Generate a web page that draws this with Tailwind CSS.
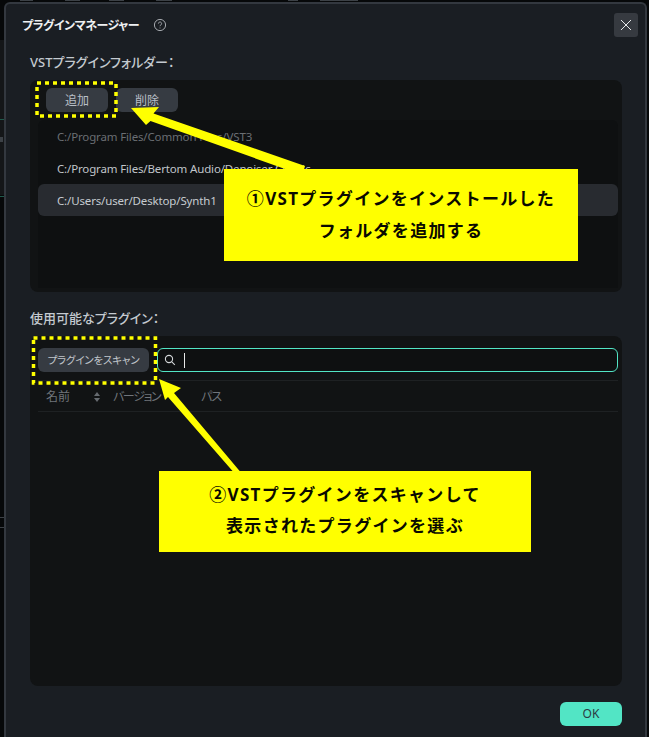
<!DOCTYPE html>
<html lang="ja"><head><meta charset="utf-8">
<script src="https://cdn.jsdelivr.net/npm/@tailwindcss/browser@4"></script>
</head>
<body class="bg-[#060809] overflow-hidden">
<div class="relative w-[649px] h-[737px] overflow-hidden pt-[2px] pl-[4px] pr-[2px] font-['Noto_Sans','Noto_Sans_CJK_JP',sans-serif] [font-feature-settings:'palt']">
  <div class="relative z-10 h-[740px] rounded-t-md border-2 border-b-0 border-[#33383f] bg-[#1a1e23] pl-[24px] pr-[23px] flex flex-col">
    <div class="h-[42px] flex items-center relative -ml-[8px]">
      <span class="text-[12px] font-bold text-[#eef0f2] mt-[1px] tracking-[-0.5px]">プラグインマネージャー</span>
      <svg class="ml-[14px]" width="14" height="14" viewBox="0 0 14 14" fill="none" stroke="#a4a8ad"><circle cx="7" cy="7" r="5.6"/><path d="M5.4 5.6a1.6 1.6 0 1 1 2.5 1.3c-.6.4-.9.7-.9 1.3"/><path d="M7 9.6v.8"/></svg>
      <div class="ml-auto -mr-[16px] w-[24px] h-[24px] rounded-[3px] bg-[#363a40] flex items-center justify-center">
        <svg width="12" height="12" viewBox="0 0 12 12" stroke="#e6e8ea" stroke-width="1"><path d="M1 1l10 10M11 1L1 11"/></svg>
      </div>
    </div>
    <div class="h-[34px] flex items-center text-[13px] font-medium text-[#c4cad0]">VSTプラグインフォルダー：</div>
    <section class="h-[212px] rounded-lg bg-[#111314] flex flex-col">
      <div class="h-[40px] shrink-0 flex items-start gap-2 pl-[16px] pt-[8px]">
        <button class="w-[62px] h-[24px] pt-[1px] rounded-md bg-[#363b42] text-[12px] text-[#b9bfc6]">追加</button>
        <button class="w-[62px] h-[24px] pt-[1px] rounded-md bg-[#363b42] text-[12px] text-[#b9bfc6]">削除</button>
      </div>
      <div class="flex-1 ml-[8px] mr-[4px] mb-[4px] rounded-t-md bg-[#0e1011] text-[11.5px] tracking-[-0.15px]">
        <div class="h-[32px] flex items-center pl-[19px] pt-[1px] text-[#6a6e73]">C:/Program Files/Common Files/VST3</div>
        <div class="h-[32px] flex items-center pl-[19px] pt-[1px] text-[#c0c5ca]">C:/Program Files/Bertom Audio/Denoiser Classic</div>
        <div class="h-[32px] flex items-center pl-[19px] pt-[1px] text-[#c6cbd0] bg-[#282b30] rounded-md">C:/Users/user/Desktop/Synth1</div>
      </div>
    </section>
    <div class="h-[44px] flex items-center text-[13px] font-medium text-[#c4cad0] pt-[10px]">使用可能なプラグイン：</div>
    <section class="h-[350px] rounded-lg bg-[#111314] pl-[8px] pr-[4px] pt-[12px]">
      <div class="flex gap-2">
        <button class="w-[111px] h-[24px] pt-[1px] rounded-md bg-[#363b42] text-[10.5px] tracking-[-0.2px] text-[#c0c5cb]">プラグインをスキャン</button>
        <div class="flex-1 h-[24px] rounded-md border border-[#52e5c5] bg-[#0e1011] flex items-center pl-[6px]">
          <svg width="12" height="12" viewBox="0 0 12 12" fill="none" stroke="#d5d8da" stroke-width="1.1"><circle cx="5" cy="5" r="3.6"/><path d="M7.8 7.8l3 3"/></svg>
          <span class="ml-[8px] w-px h-[15px] bg-[#e8e8e8]"></span>
        </div>
      </div>
      <div class="mt-[8px] h-[32px] pt-[1px] border-y border-[#1e2123] flex items-center text-[12px] text-[#70757b] pl-[8px]">
        <span class="w-[47px]">名前</span>
        <svg class="w-[20px]" width="8" height="10" viewBox="0 0 8 10" fill="#666b70" preserveAspectRatio="xMinYMid"><path d="M4 0l3 4H1zM4 10L1 6h6z"/></svg>
        <span class="w-[88px] tracking-[-1.4px]">バージョン</span>
        <span class="tracking-[-1px]">パス</span>
      </div>
    </section>
    <div class="flex justify-end mt-[16px]">
      <button class="w-[62px] h-[24px] rounded-md bg-[#52e5c5] text-[12px] text-[#2c3a42]">OK</button>
    </div>
  </div>

  <svg class="absolute left-0 top-0" width="649" height="737" fill="#3c4146">
    <rect x="0" y="40" width="4" height="155" fill="#141618"/>
    <rect x="0" y="119" width="4" height="1" fill="#1f5a4c"/>
    <rect x="0" y="196" width="4" height="1" fill="#1f5a4c"/>
    <rect x="0" y="137" width="3" height="5"/>
    <rect x="0" y="517" width="4" height="1"/>
    <rect x="0" y="527" width="4" height="1"/>
    <rect x="20" y="0" width="13" height="1"/><rect x="65" y="0" width="15" height="1"/><rect x="109" y="0" width="15" height="1"/><rect x="156" y="0" width="16" height="1"/><rect x="288" y="0" width="10" height="1"/><rect x="320" y="0" width="38" height="1"/>
  </svg>

  <svg class="absolute left-0 top-0 z-20 pointer-events-none" width="649" height="737" fill="none">
    <rect x="37" y="83" width="79" height="33" stroke="#ffff00" stroke-width="3.5" stroke-dasharray="4 4"/>
    <rect x="33.5" y="338" width="122" height="45" stroke="#ffff00" stroke-width="3.5" stroke-dasharray="4 4"/>
    <path d="M131 108L159 107L153.5 113.5L305 166L302 175L150.5 121L146 125Z" fill="#ffff00"/>
    <path d="M159 379L181 388L174 393L243 475L236 475L168 397L165 400Z" fill="#ffff00"/>
  </svg>

  <div class="absolute z-30 left-[224px] top-[169px] w-[354px] h-[92px] pb-[2px] bg-[#ffff00] flex flex-col items-center justify-center gap-[9px] text-[17px] leading-[23px] font-bold text-[#0a0a00] tracking-[1.3px] [font-feature-settings:normal]">
    <div>①VSTプラグインをインストールした</div>
    <div>フォルダを追加する</div>
  </div>
  <div class="absolute z-30 left-[159px] top-[471px] w-[372px] h-[81px] pb-[3px] bg-[#ffff00] flex flex-col items-center justify-center gap-[8px] text-[17px] leading-[23px] font-bold text-[#0a0a00] tracking-[1.3px] [font-feature-settings:normal]">
    <div>②VSTプラグインをスキャンして</div>
    <div>表示されたプラグインを選ぶ</div>
  </div>
</div>
</body></html>
